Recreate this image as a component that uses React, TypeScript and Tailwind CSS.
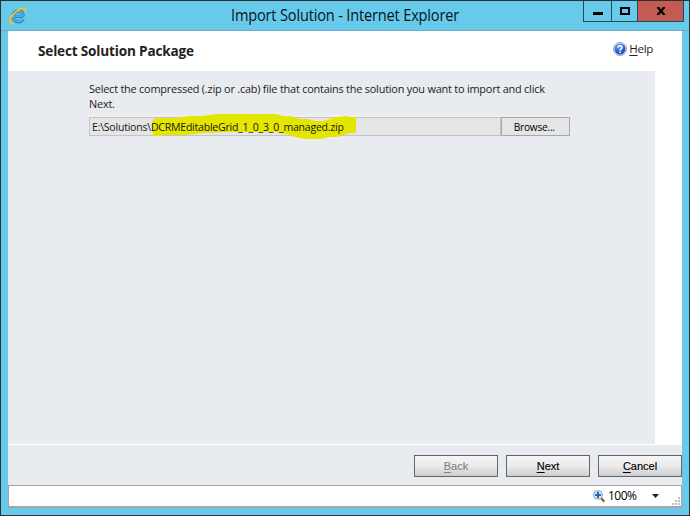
import React from 'react';

const ui = "font-['Open_Sans','Noto_Sans',sans-serif]";

function IeLogo() {
  return (
    <svg className="h-[18px] w-[18px]" viewBox="0 0 18 18" fill="none">
      <path d="M14.3 9.4H5.2M14.2 9.4C14.3 5.9 12.6 4 9.6 4C6.3 4 4.2 6.3 4.2 9.3C4.2 12.7 6.4 14.7 9.5 14.7C11.8 14.7 13.2 13.8 14 12.2" stroke="#2b86c5" strokeWidth="3.4" />
      <path d="M13.6 9.2H5.2M13.9 9C13.9 5.9 12.4 4.2 9.6 4.2C6.5 4.2 4.4 6.3 4.4 9.3C4.4 12.5 6.5 14.4 9.5 14.4C11.5 14.4 12.8 13.7 13.7 12.4" stroke="#63b9ea" strokeWidth="1.3" />
      <path d="M5 15.8C2.9 16.9 1.3 16.8 1.1 15C.8 12.2 3.6 7.7 7.2 4.6C11 1.3 15.2.1 16.2 1.7C16.6 2.4 16.4 3.4 15.8 4.8" stroke="#f6c21b" strokeWidth="1.8" />
    </svg>
  );
}

function HelpIcon() {
  return (
    <svg className="h-[14px] w-[14px]" viewBox="0 0 14 14">
      <defs>
        <radialGradient id="help" cx=".4" cy=".25" r=".8">
          <stop offset="0" stopColor="#79a5f5" />
          <stop offset=".6" stopColor="#2c62d4" />
          <stop offset="1" stopColor="#1745ad" />
        </radialGradient>
      </defs>
      <circle cx="7" cy="7" r="6.5" fill="#eef3fc" stroke="#8796b8" strokeWidth=".9" />
      <circle cx="7" cy="7" r="5.5" fill="url(#help)" />
      <path d="M4.9 5.6C5 4.3 5.8 3.7 7 3.7C8.3 3.7 9.1 4.4 9.1 5.4C9.1 6.8 7.1 6.8 7.1 8.4" fill="none" stroke="#fff" strokeWidth="1.5" />
      <path d="M6.3 9.4h1.6v1.5H6.3z" fill="#fff" />
    </svg>
  );
}

function ZoomIcon() {
  return (
    <svg className="h-[13px] w-[13px]" viewBox="0 0 13 13">
      <path d="M8.2 8.2L11.3 11.7" stroke="#8d5b40" strokeWidth="2.3" />
      <circle cx="5" cy="5" r="4.3" fill="#d9effc" stroke="#8ba4bd" strokeWidth="1.1" />
      <path d="M5 2.1V7.9M2.1 5H7.9" stroke="#146cc4" strokeWidth="2" />
    </svg>
  );
}

function WizardButton({ first, rest, disabled }: { first: string; rest: string; disabled?: boolean }) {
  return (
    <button
      disabled={disabled}
      className={`h-[22px] w-[84px] border border-[#656565] bg-linear-to-b from-[#f6f6f6] via-[#ebebeb] to-[#cecece] font-['Liberation_Sans',Arial,sans-serif] text-[11px] leading-[20px] [-webkit-text-stroke:0.15px] ${disabled ? 'text-[#838383]' : 'text-black'}`}
    >
      <span className="underline underline-offset-2">{first}</span>{rest}
    </button>
  );
}

function TitleBar() {
  return (
    <div className="flex h-[30px] border-b border-[#71a9c5]">
      <div className="w-[582px] pt-[6px] pl-2">
        <div className="flex">
          <IeLogo />
          <h1 className="-mt-[2px] ml-[204px] origin-left scale-x-[0.94] text-[15.5px] leading-[20px] tracking-[-0.18px] whitespace-nowrap text-[#07151b]">Import Solution - Internet Explorer</h1>
        </div>
      </div>
      <div className="flex h-[21px] w-[101px] border-x border-b border-[#28485a]">
        <button aria-label="Minimize" className="flex w-[27px] items-end justify-center pb-[6px]"><span className="h-[3px] w-[10px] bg-black" /></button>
        <button aria-label="Maximize" className="flex w-[27px] items-center justify-center border-x border-[#28485a]"><span className="h-[8px] w-[10px] border-2 border-black" /></button>
        <button aria-label="Close" className="flex flex-1 items-center justify-center bg-[#c35b52]">
          <svg className="h-2 w-[10px]" viewBox="0 0 10 8"><path d="M1.5 0L8.5 8M8.5 0L1.5 8" stroke="#000" strokeWidth="2.3" /></svg>
        </button>
      </div>
    </div>
  );
}

export default function App() {
  return (
    <div className={`h-[520px] w-[692px] overflow-hidden bg-white ${ui}`}>
      <div className="h-[516px] w-[690px] border border-[#2f3034] bg-[#67caea]">
        <TitleBar />
        <main className="ml-[7px] w-[674px]">
          <header className="flex h-10 items-start justify-between bg-white pr-[29px] pl-[30px]">
            <h2 className="origin-left scale-x-[0.969] pt-[11px] text-[14px] leading-[18px] font-bold tracking-[-0.18px] text-[#222]">Select Solution Package</h2>
            <a className="flex items-center gap-[2px] pt-[10px] text-[11.5px] leading-4 tracking-[-0.3px] text-[#222]"><HelpIcon /><span><span className="underline underline-offset-2">H</span>elp</span></a>
          </header>
          <section className="flex h-[374px] border-b border-white bg-white">
            <div className="h-[373px] w-[647px] bg-[#e8ebf0] pt-[10px] pl-[81px]">
              <p className="origin-left scale-x-[0.947] text-[11.5px] leading-[15px] tracking-[-0.22px] whitespace-nowrap text-[#1c1c1c]">Select the compressed (.zip or .cab) file that contains the solution you want to import and click<br />Next.</p>
              <div className="mt-[4px] w-[481px] border-t-2 border-[#efefef]">
                <div className="relative flex h-[19px]">
                  <div className="w-[412px] border border-[#c4c4c4] bg-[#e5e5e5]" />
                  <svg className="absolute -top-[4px] left-[63px] h-7 w-[206px]" viewBox="152 113 206 28">
                    <path d="M153 119L157 118H174L190 116H202L217 114H276L284 116H290L301 119H308L315 121H323L330 119L337 117L348 116V117H356V133H350L343 135L337 137H329L321 139H306L295 137L286 134L276 132H230L202 133L186 135H162V136H153V132H152V123Z" fill="#e5e600" />
                  </svg>
                  <span className="absolute left-[3px] origin-left scale-x-[0.957] text-[11px] leading-[19px] tracking-[-0.23px] whitespace-nowrap text-[#151515]">E:\Solutions\DCRMEditableGrid_1_0_3_0_managed.zip</span>
                  <button className="w-[69px] border border-[#a8a8a8] bg-[#e5e5e5] text-[11px] leading-[17px] tracking-[-0.25px] text-black"><span className="-ml-[2px] inline-block scale-x-[0.92]">Browse...</span></button>
                </div>
              </div>
            </div>
          </section>
          <footer className="flex h-10 justify-end gap-2 bg-[#e8ebf0] pt-[10px]">
            <WizardButton first="B" rest="ack" disabled />
            <WizardButton first="N" rest="ext" />
            <WizardButton first="C" rest="ancel" />
          </footer>
          <div className="flex h-[23px] items-center justify-end border border-b-2 border-[#a5a5a5] bg-white text-[12px] tracking-[-0.5px] text-black">
            <ZoomIcon />
            <span className="ml-[2px] w-[30px] whitespace-nowrap">100%</span>
            <svg className="ml-[14px] h-1 w-[7px]" viewBox="0 0 7 4"><path d="M0 0H7L3.5 4Z" fill="#222" /></svg>
            <svg className="mt-[11px] ml-[13px] h-[9px] w-[9px]" viewBox="0 0 9 9"><path d="M6 0h2v2H6zM3 3h2v2H3zM6 3h2v2H6zM0 6h2v2H0zM3 6h2v2H3zM6 6h2v2H6z" fill="#c0c0c0" /></svg>
          </div>
        </main>
      </div>
    </div>
  );
}
